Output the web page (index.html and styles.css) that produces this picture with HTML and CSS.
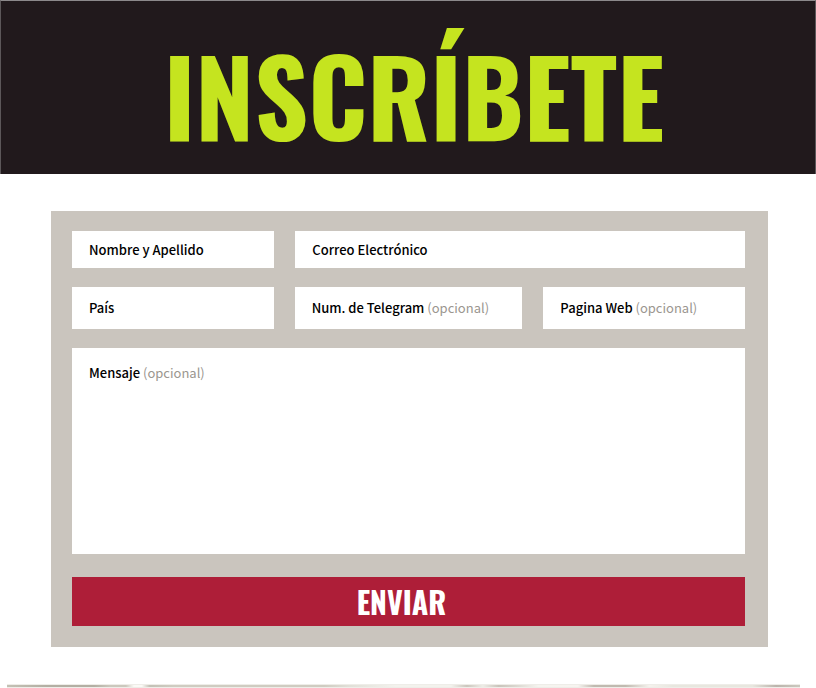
FILE: index.html
```html
<!DOCTYPE html>
<html lang="es">
<head>
<meta charset="utf-8">
<title>Inscríbete</title>
<link rel="stylesheet" href="styles.css">
</head>
<body>
<header class="banner"><h1 class="title">INSCRÍBETE</h1></header>
<main>
<form class="form">
  <div class="row row-top">
    <label class="field"><span>Nombre y Apellido</span><input type="text" name="nombre"></label>
    <label class="field"><span>Correo Electrónico</span><input type="email" name="correo"></label>
  </div>
  <div class="row row-mid">
    <label class="field"><span>País</span><input type="text" name="pais"></label>
    <label class="field"><span>Num. de Telegram <em>(opcional)</em></span><input type="text" name="telegram"></label>
    <label class="field"><span>Pagina Web <em>(opcional)</em></span><input type="url" name="web"></label>
  </div>
  <label class="field message"><span>Mensaje <em>(opcional)</em></span><textarea name="mensaje"></textarea></label>
  <button class="submit" type="submit">ENVIAR</button>
</form>
</main>
<div class="strip"></div>
</body>
</html>
```
FILE: styles.css
```css
* { box-sizing: border-box; }

body {
  margin: 0;
  background: #fff;
  color: #000;
  font: 500 13px/20px "Noto Sans CJK SC", sans-serif;
}

.banner {
  padding: 28px 0 15px 12px;
  border: 1px solid #5c5759;
  border-top-color: #8c898b;
  border-bottom: 0;
  background: #21191c;
  text-align: center;
}

.title {
  margin: 0;
  color: #c5e41f;
  font: 700 105px/130px "Oswald", "Roboto Condensed", sans-serif;
}

.form {
  display: flex;
  flex-direction: column;
  margin: 37px 48px 0 51px;
  padding: 20px 23px 21px 21px;
  background: #cac5be;
}

.row {
  display: grid;
  gap: 21px;
  margin-bottom: 19px;
}

.row-top { grid-template-columns: 202fr 449fr; }
.row-mid { grid-template-columns: 202fr 228fr 202fr; }

.field {
  display: flex;
  align-items: center;
  min-width: 0;
  padding: 0 17px;
  background: #fff;
}

.row-top .field { height: 37px; }
.row-mid .field { height: 42px; }

.field span { flex: none; }
.field em { color: #9b968f; font-style: normal; font-weight: 400; }

.field input,
.field textarea {
  flex: 1;
  min-width: 0;
  padding: 0;
  border: 0;
  outline: 0;
  background: transparent;
  font: inherit;
}

.message {
  flex-direction: column;
  align-items: stretch;
  gap: 8px;
  height: 206px;
  padding: 15px 17px;
}

.message textarea { resize: none; }

.submit {
  height: 49px;
  margin-top: 23px;
  padding: 0 14px 0 0;
  border: 0;
  background: #ae1e38;
  color: #fff;
  font: 700 30px/49px "Oswald", "Roboto Condensed", sans-serif;
}

.strip {
  height: 4px;
  margin: 37px 16px 0 7px;
  border: solid #eeede8;
  border-width: 1px 0;
  background: linear-gradient(90deg,
    #c4c1b5 0, #b3afa3 5%, #b3afa3 11%, #cbc8bd 13%, #cbc8bd 15%,
    #fbfaf6 16%, #fbfaf6 17%, #c3c1b6 18%, #cfccc1 21%, #cfccc1 40%,
    #e0dfd7 43%, #f3f2ed 49%, #f3f2ed 56%, #cbc6bd 58%, #eeede7 60%,
    #c9c4bb 62%, #d8d5cd 64%, #f5f4ef 67%, #f7f4f0 72%, #c0bab0 74%,
    #c0bab0 78%, #f5f2ed 81%, #e8e7df 84%, #e8e7df 94%, #bbb4ac 97%, #cbc9bf 100%);
}
```
